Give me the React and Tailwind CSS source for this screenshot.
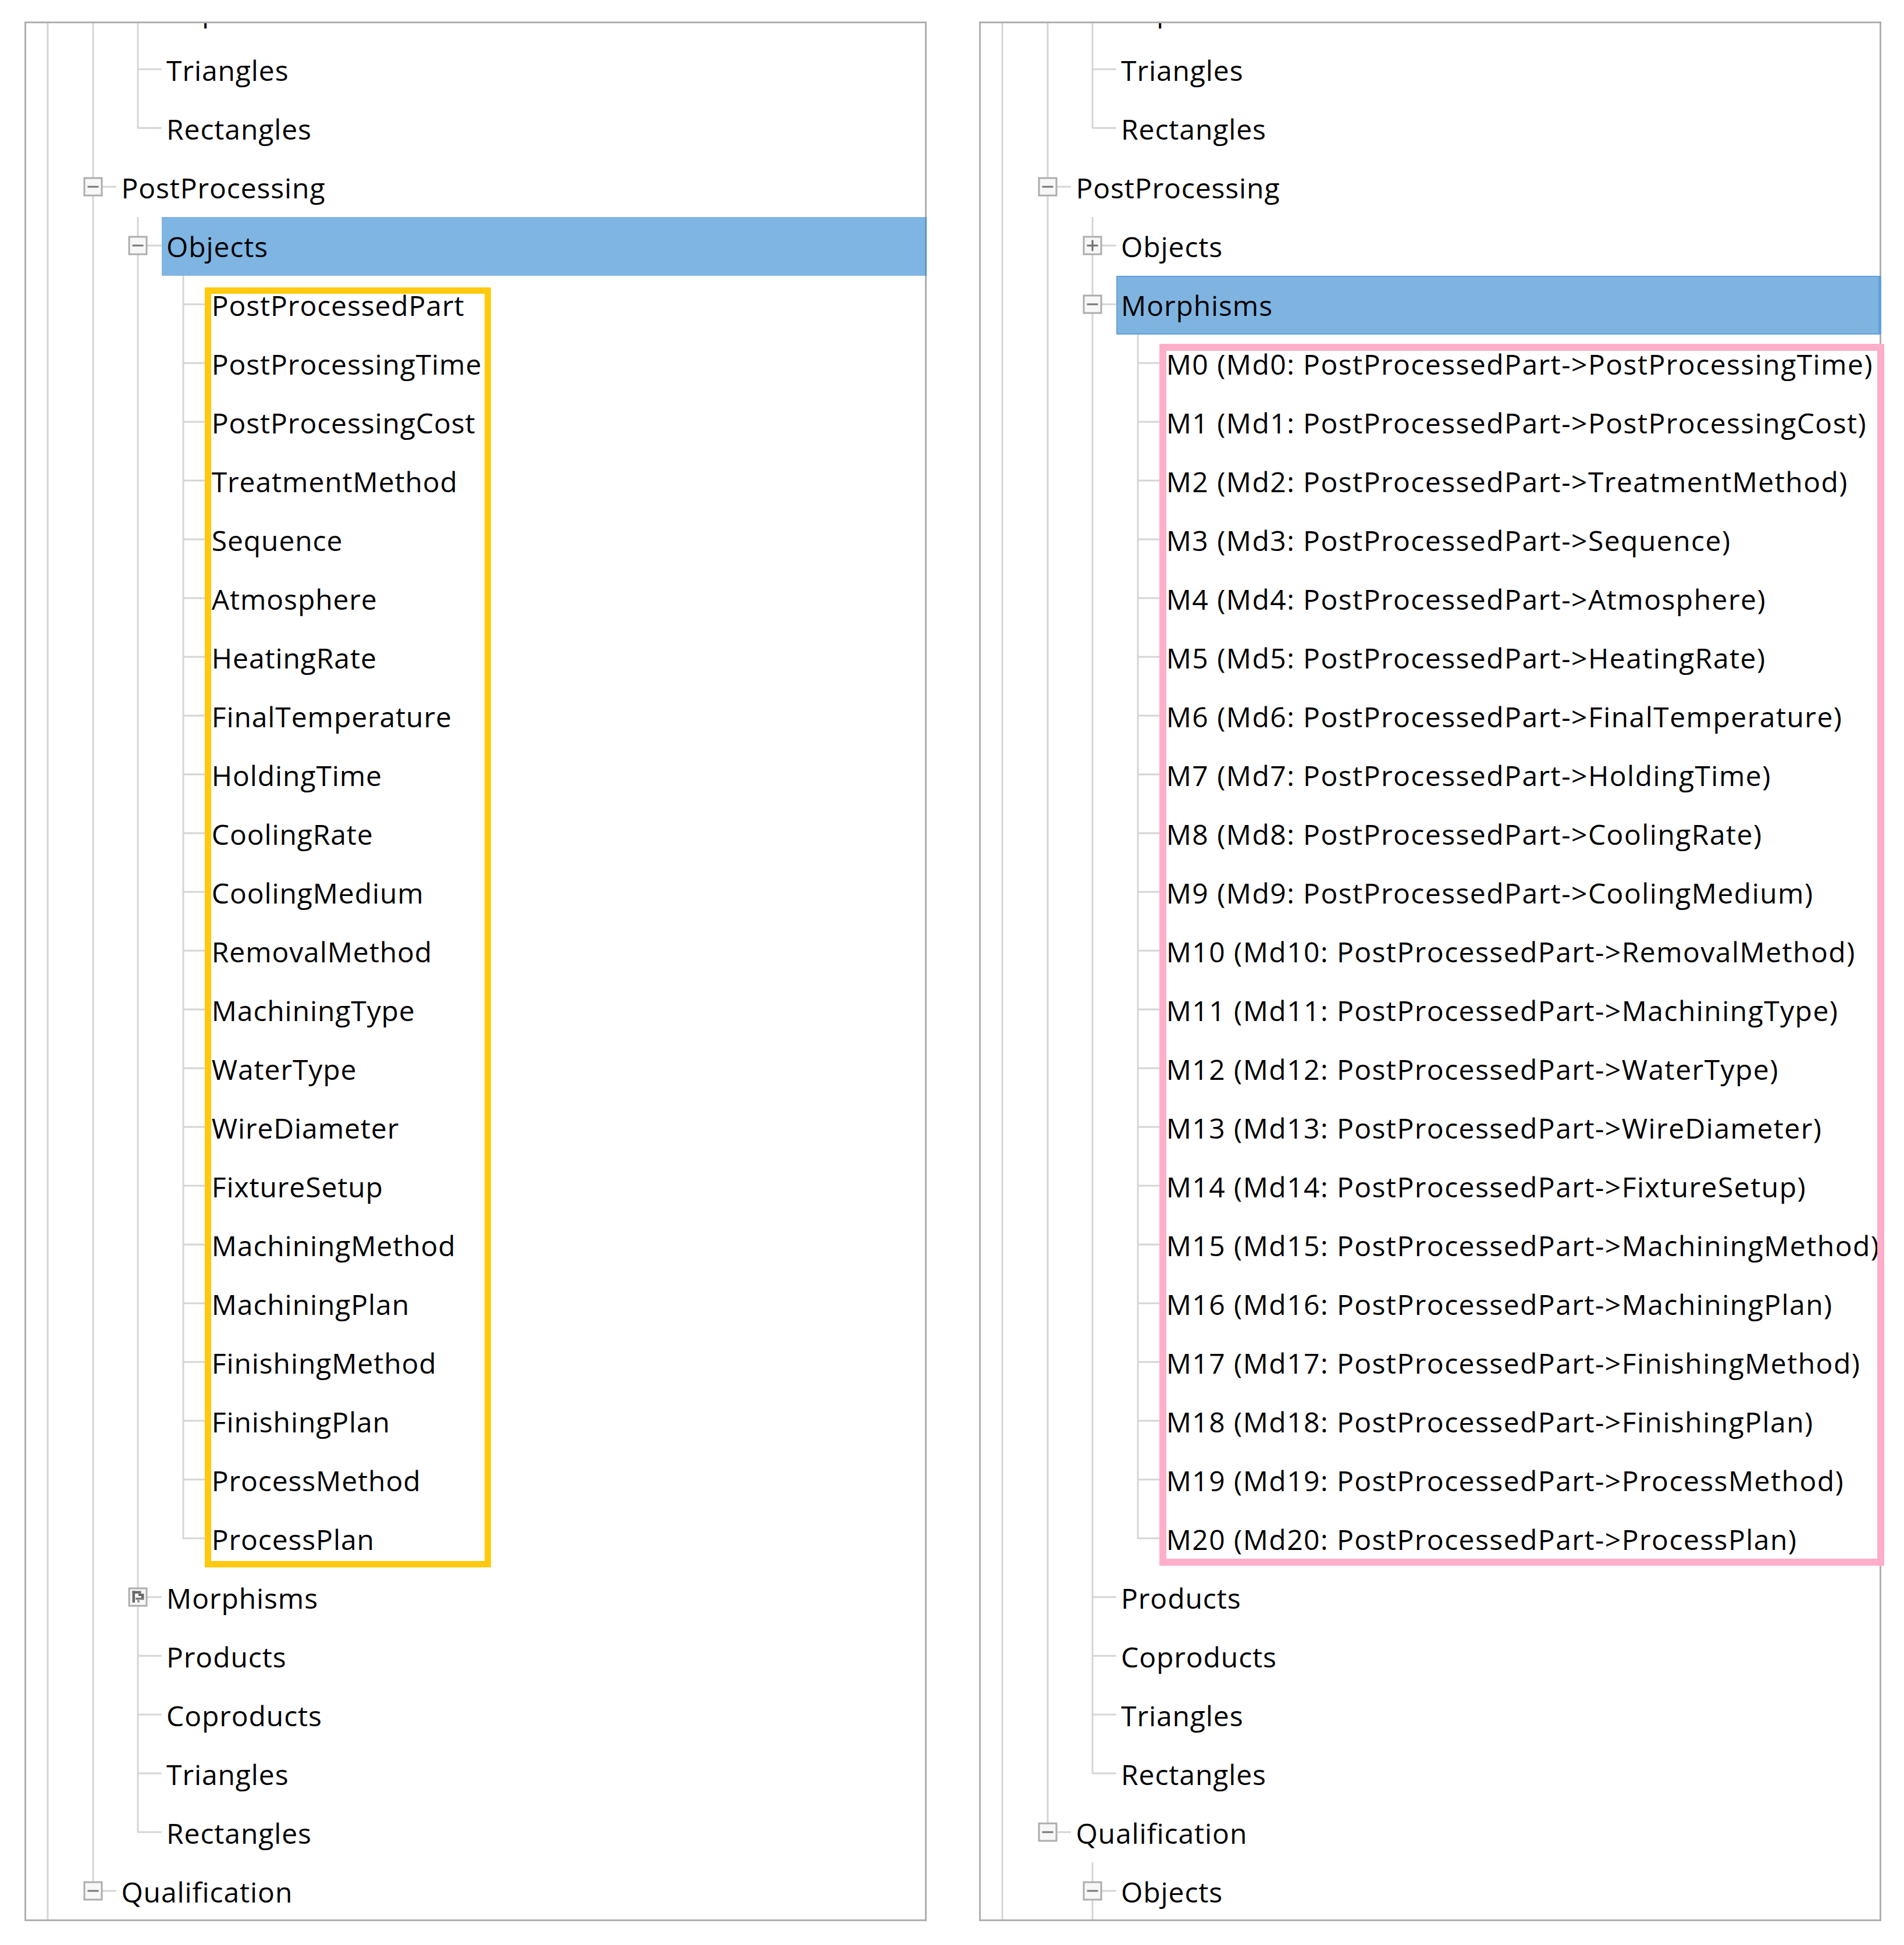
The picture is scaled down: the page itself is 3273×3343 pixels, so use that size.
import React from 'react';

const CELL = 77.7;
const ROW = 101;
const LINE = '#d5d5d5';

const objects = [
    'PostProcessedPart', 'PostProcessingTime', 'PostProcessingCost', 'TreatmentMethod', 'Sequence',
    'Atmosphere', 'HeatingRate', 'FinalTemperature', 'HoldingTime', 'CoolingRate', 'CoolingMedium',
    'RemovalMethod', 'MachiningType', 'WaterType', 'WireDiameter', 'FixtureSetup', 'MachiningMethod',
    'MachiningPlan', 'FinishingMethod', 'FinishingPlan', 'ProcessMethod', 'ProcessPlan',
];

// morphisms go from the first object to every other one
const morphisms = objects.slice(1).map((o, i) => `M${i} (Md${i}: PostProcessedPart->${o})`);

const tail = [{ label: 'Products' }, { label: 'Coproducts' }, { label: 'Triangles' }, { label: 'Rectangles' }];
const head = [{ label: 'Coproducts' }, { label: 'Triangles' }, { label: 'Rectangles' }];

const leftTree = [
    {
        label: 'PostProcessing', exp: 'minus', children: [
            { label: 'Objects', exp: 'minus', selected: true, children: objects.map((label) => ({ label })) },
            { label: 'Morphisms', exp: 'odd' },
            ...tail,
        ],
    },
    { label: 'Qualification', exp: 'minus' },
];

const rightTree = [
    {
        label: 'PostProcessing', exp: 'minus', children: [
            { label: 'Objects', exp: 'plus' },
            { label: 'Morphisms', exp: 'minus', selected: true, children: morphisms.map((label) => ({ label, wide: true })) },
            ...tail,
        ],
    },
    {
        label: 'Qualification', exp: 'minus', children: [
            { label: 'Objects', exp: 'minus', more: true },
        ],
    },
];

function flatten(nodes, level, guides, out) {
    nodes.forEach((n, i) => {
        const last = i === nodes.length - 1 && !n.more;
        out.push({ ...n, level, guides, last });
        if (n.children) flatten(n.children, level + 1, [...guides, !last], out);
    });
    return out;
}

function buildRows(tree) {
    // the view is scrolled: the first rows belong to the node above PostProcessing
    return [...flatten(head, 2, [true, true], []), ...flatten(tree, 1, [true], [])];
}

function GuideCell({ line }) {
    return (
        <svg width={CELL} height={ROW} className="block shrink-0">
            {line && <rect x={35.5} y={0} width={3} height={ROW} fill={LINE} />}
        </svg>
    );
}

function OwnCell({ last, exp }) {
    return (
        <svg width={CELL} height={ROW} className="block shrink-0">
            <rect x={35.5} y={0} width={3} height={last ? 50 : ROW} fill={LINE} />
            <rect x={37} y={47.5} width={CELL - 37} height={3} fill={LINE} />
            {exp && (
                <g>
                    <rect x={22} y={34} width={30} height={30} fill="#f7f7f7" stroke="#adadad" strokeWidth={3} />
                    {exp === 'minus' && <rect x={27.5} y={47.5} width={19} height={3} fill="#777777" />}
                    {exp === 'plus' && (
                        <g fill="#6f6f6f">
                            <rect x={27.5} y={47.5} width={19} height={3} />
                            <rect x={35.5} y={39.5} width={3} height={19} />
                        </g>
                    )}
                    {exp === 'odd' && (
                        <g>
                            <rect x={27.5} y={38.5} width={4.5} height={20} fill="#6a6a6a" />
                            <rect x={27.5} y={38.5} width={15} height={4.5} fill="#6a6a6a" />
                            <rect x={38} y={43.5} width={9} height={3.5} fill="#555555" />
                            <rect x={43} y={43.5} width={4.5} height={10} fill="#6a6a6a" />
                            <rect x={33} y={50} width={14} height={3.5} fill="#7a7a7a" />
                            <rect x={36} y={53.5} width={4} height={5} fill="#9a9a9a" />
                        </g>
                    )}
                </g>
            )}
        </svg>
    );
}

function Row({ row, focused }) {
    let label = 'border-r-[3px] border-[#b0b0b0] pl-[8px]';
    if (row.selected) {
        label = focused
            ? 'bg-[#7fb4e1] border-2 border-r-[5px] border-[#62a0d8] pl-[6px]'
            : 'bg-[#7fb5e2] border-r-[3px] border-[#5e95c6] pl-[8px]';
    }
    const track = row.wide ? 'tracking-[1.45px]' : 'tracking-[0.9px]';
    return (
        <div className="flex h-[101px] shrink-0">
            {row.guides.map((g, i) => (
                <GuideCell key={i} line={g} />
            ))}
            <OwnCell last={row.last} exp={row.exp} />
            <div className={`flex min-w-0 flex-1 items-center overflow-hidden whitespace-nowrap ${track} ${label}`}>
                {row.label}
            </div>
        </div>
    );
}

function TreePanel({ tree, focused, mark }) {
    const rows = buildRows(tree);
    return (
        <div className="relative shrink-0">
            <div className="h-[3265px] w-[1551px] overflow-hidden border-y-[3px] border-l-[3px] border-[#b0b0b0] bg-white">
                <div className="-mt-[71px] flex flex-col text-[48px] text-black">
                    {rows.map((row, i) => (
                        <Row key={i} row={row} focused={focused} />
                    ))}
                </div>
            </div>
            {mark}
        </div>
    );
}

export default function App() {
    return (
        <div className="h-[3343px] w-[3273px] bg-white font-['Open_Sans',sans-serif]">
            <div className="flex gap-[90px] pl-[42px] pt-[37px]">
                <TreePanel
                    tree={leftTree}
                    mark={<div className="pointer-events-none absolute left-[310px] top-[457px] h-[2200px] w-[492px] border-[11px] border-[#ffc90e]" />}
                />
                <TreePanel
                    tree={rightTree}
                    focused
                    mark={<div className="pointer-events-none absolute left-[310px] top-[554px] h-[2100px] w-[1246px] border-[12px] border-[#ffaec9]" />}
                />
            </div>
        </div>
    );
}
